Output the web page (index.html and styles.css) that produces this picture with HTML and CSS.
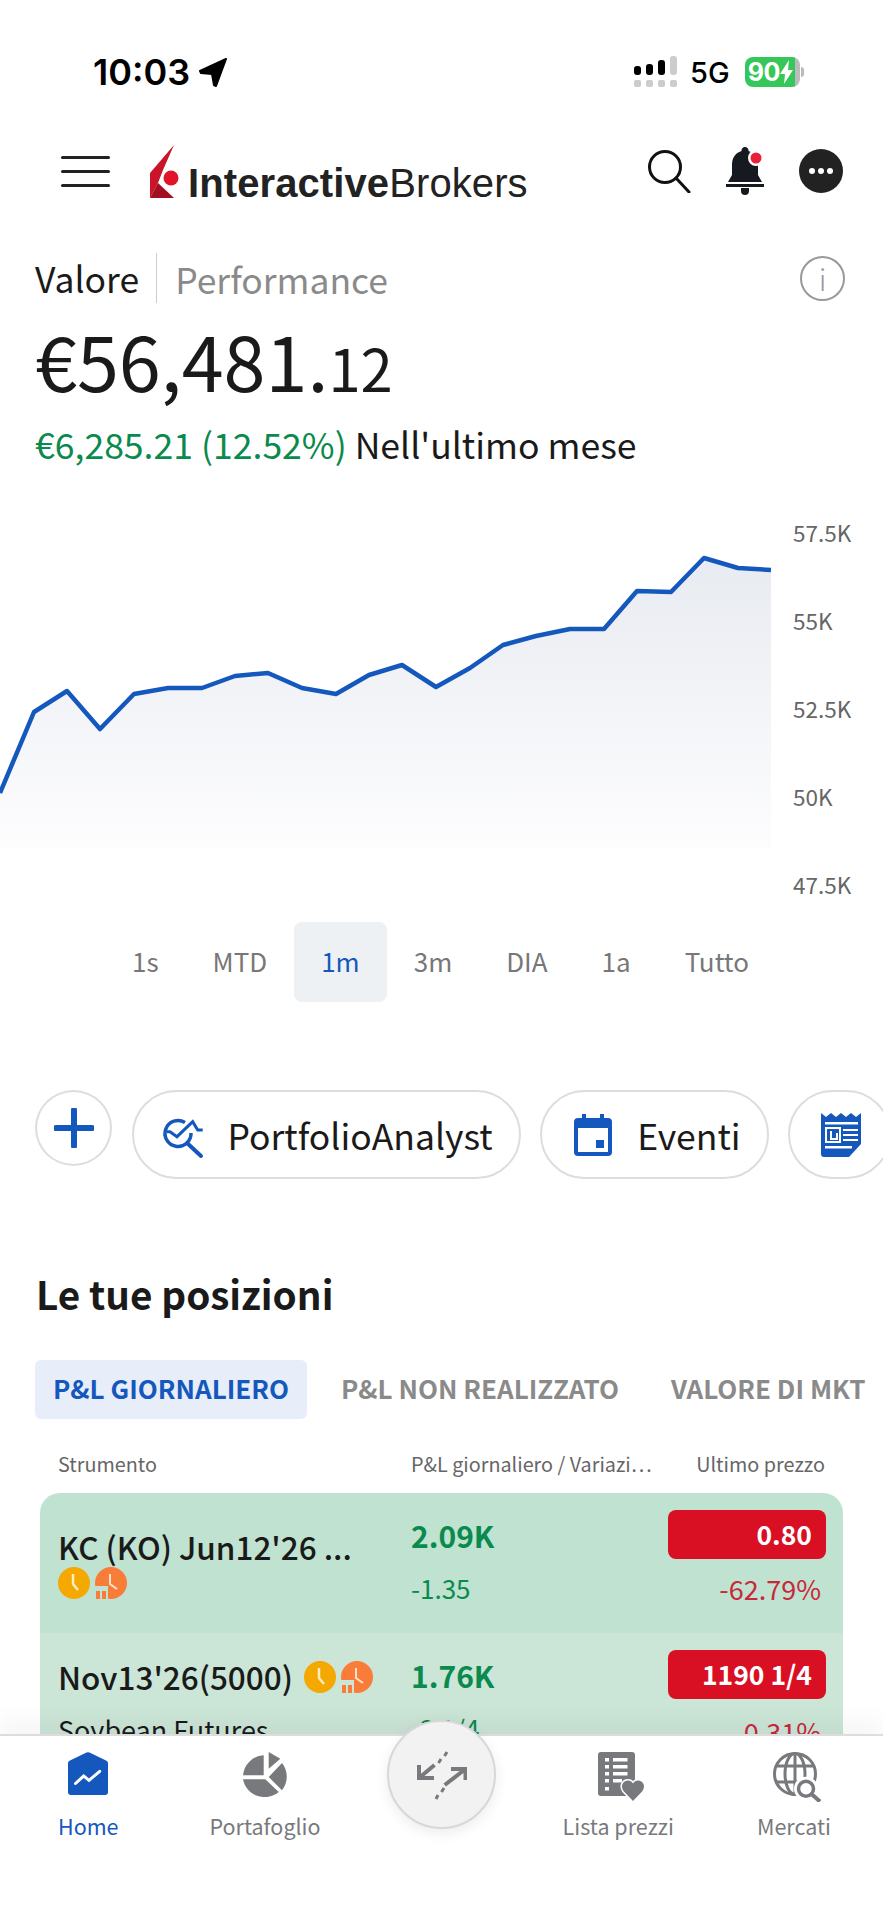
FILE: index.html
```html
<!doctype html>
<html lang="it">

<head>
  <meta charset="UTF-8" />
  <meta name="viewport" content="width=device-width, initial-scale=1.0" />
  <title>Interactive Brokers</title>
  <link rel="stylesheet" href="styles.css">
</head>

<body>
  <svg class="defs" width="0" height="0">
    <symbol id="clock-open" viewBox="0 0 32 32">
      <circle cx="16" cy="16" r="16" fill="#f5a800" />
      <path d="M15 7v10l5 6" fill="none" stroke="#fbeec4" stroke-width="2.5" />
    </symbol>
    <symbol id="clock-late" viewBox="0 0 32 32">
      <circle cx="16" cy="16" r="16" fill="#f97c38" />
      <path d="M15 7v10l7 5" fill="none" stroke="#fde2cf" stroke-width="2" />
      <rect x="-1" y="19" width="14" height="14" fill="currentColor" />
      <path d="M1 24h4v8H1zM7 24h4v8H7z" fill="#f97c38" />
    </symbol>
  </svg>

  <div class="app">
    <!-- barra di stato -->
    <div class="status">
      <span class="time">10:03</span>
      <svg class="location" width="30" height="30" viewBox="0 0 30 30">
        <path d="M28 2 2 14l1 2 11 1 2 11 2 1z" fill="#000" stroke="#000" stroke-width="2" stroke-linejoin="round" />
      </svg>
      <svg class="signal" width="46" height="32" viewBox="0 0 46 32">
        <rect x="0" y="10" width="7" height="9" rx="3" fill="#000" />
        <rect x="12" y="8" width="7" height="11" rx="3" fill="#000" />
        <rect x="24" y="4" width="7" height="15" rx="3" fill="#000" />
        <rect x="36" y="0" width="7" height="19" rx="3" fill="#ccc" />
        <rect x="0" y="24" width="7" height="7" rx="2" fill="#ccc" />
        <rect x="12" y="24" width="7" height="7" rx="2" fill="#ccc" />
        <rect x="24" y="24" width="7" height="7" rx="2" fill="#ccc" />
        <rect x="36" y="24" width="7" height="7" rx="2" fill="#ccc" />
      </svg>
      <span class="net">5G</span>
      <div class="battery">
        <span class="battery-level">90</span>
        <svg width="14" height="24" viewBox="0 0 14 24">
          <path d="M9 0 0 14h5l-1 10 9-14H8z" fill="#fff" />
        </svg>
      </div>
    </div>

    <!-- intestazione -->
    <div class="nav">
      <div class="burger"><i></i><i></i><i></i></div>
      <div class="logo">
        <svg width="30" height="54" viewBox="0 0 30 54">
          <path d="M25 0 1 28v25l8-15 5-13z" fill="#c9142a" />
          <path d="M1 53 9 38l16 15z" fill="#a30f20" />
          <circle cx="22" cy="33" r="7.5" fill="#e01528" />
        </svg>
        <span class="logo-text"><b>Interactive</b>Brokers</span>
      </div>
      <div class="nav-icons">
        <svg width="44" height="44" viewBox="0 0 44 44">
          <circle cx="18" cy="18" r="15.5" fill="none" stroke="#111" stroke-width="3" />
          <path d="m29 29 13 14" fill="none" stroke="#111" stroke-width="3" stroke-linecap="round" />
        </svg>
        <svg width="40" height="48" viewBox="0 0 40 48">
          <path d="M20 0a3.500 3.500 0 0 1 3.500 4C30 6 33 11 33 18v10l4 7H3l4-7V18C7 11 10 6 16.500 4A3.500 3.500 0 0 1 20 0z" fill="#16191f" />
          <path d="M1 37h38v3H1zM16 41h8v3a4 4 0 0 1-8 0z" fill="#16191f" />
          <circle cx="31" cy="11" r="8" fill="#fff" />
          <circle cx="31" cy="11" r="5.500" fill="#e8203a" />
        </svg>
        <svg width="44" height="44" viewBox="0 0 44 44">
          <circle cx="22" cy="22" r="22" fill="#222" />
          <circle cx="13" cy="22" r="3" fill="#fff" />
          <circle cx="22" cy="22" r="3" fill="#fff" />
          <circle cx="31" cy="22" r="3" fill="#fff" />
        </svg>
      </div>
    </div>

    <!-- riepilogo -->
    <div class="summary">
      <div class="switch">
        <span class="switch-on">Valore</span>
        <span class="switch-off">Performance</span>
        <span class="info">i</span>
      </div>
      <div class="amount">€56,481.<small>12</small></div>
      <div class="change"><span class="up">€6,285.21 (12.52%)</span> Nell'ultimo mese</div>
    </div>

    <!-- grafico -->
    <div class="chart">
      <svg class="plot" width="772" height="400" viewBox="0 500 772 400">
        <defs>
          <linearGradient id="area" x1="0" y1="0" x2="0" y2="1">
            <stop offset="0" stop-color="#e8ebf1" />
            <stop offset="1" stop-color="#fdfdfe" />
          </linearGradient>
        </defs>
        <path fill="url(#area)" d="M0 793 34 712 67 691 100 729 134 694 168 688 202 688 235 676 268 673 302 688 336 694 369 675 402 665 436 687 470 668 503 645 536 636 570 629 604 629 637 591 671 592 704 558 738 568 771 570V848H0z" />
        <path fill="none" stroke="#1558bd" stroke-width="4.500" stroke-linejoin="round" d="M0 793 34 712 67 691 100 729 134 694 168 688 202 688 235 676 268 673 302 688 336 694 369 675 402 665 436 687 470 668 503 645 536 636 570 629 604 629 637 591 671 592 704 558 738 568 771 570" />
      </svg>
      <div class="axis">
        <span>57.5K</span>
        <span>55K</span>
        <span>52.5K</span>
        <span>50K</span>
        <span>47.5K</span>
      </div>
    </div>

    <div class="ranges">
      <span class="range">1s</span>
      <span class="range">MTD</span>
      <span class="range range-on">1m</span>
      <span class="range">3m</span>
      <span class="range">DIA</span>
      <span class="range">1a</span>
      <span class="range">Tutto</span>
    </div>

    <!-- scorciatoie -->
    <div class="chips">
      <div class="add">
        <svg width="40" height="40" viewBox="0 0 40 40">
          <path d="M20 2v36M2 20h36" stroke="#1558bd" stroke-width="6" stroke-linecap="round" />
        </svg>
      </div>
      <div class="chip">
        <svg class="chip-pa" width="50" height="50" viewBox="0 0 50 50">
          <path d="M29 12.500A13 13 0 1 0 35 23" fill="none" stroke="#1558bd" stroke-width="3.500" />
          <path d="m31 33 14 13" stroke="#1558bd" stroke-width="4" stroke-linecap="round" />
          <path d="M11 21.700h3l7 5 15.700-15 5 8.300h5" fill="none" stroke="#1558bd" stroke-width="3" />
        </svg>
        <span>PortfolioAnalyst</span>
      </div>
      <div class="chip chip-events">
        <svg width="38" height="42" viewBox="0 0 38 42">
          <path d="M8 0h4v4h14V0h4v4h4a4 4 0 0 1 4 4v30a4 4 0 0 1-4 4H4a4 4 0 0 1-4-4V8a4 4 0 0 1 4-4h4zM4 14v24h30V14zM22 26h8v8h-8z" fill="#1558bd" fill-rule="evenodd" />
        </svg>
        <span>Eventi</span>
      </div>
      <div class="chip">
        <svg class="chip-news" width="44" height="46" viewBox="0 0 44 46">
          <path d="M2 1l5 4 5-4 5 4 5-4 5 4 5-4 5 4 5-4v31L30 45H5a3 3 0 0 1-3-3z" fill="#1558bd" />
          <path d="M6 10h33v2.500H6zM24 17h15v2H24zM24 22h15v2H24zM24 27h15v2H24zM6 34h27v2.500H6z" fill="#fff" />
          <path d="M7 16h14v14H7z" fill="none" stroke="#fff" stroke-width="2" />
          <path d="M12 19v8h6v-6" fill="none" stroke="#fff" stroke-width="2" />
        </svg>
      </div>
    </div>

    <!-- posizioni -->
    <h2 class="section-title">Le tue posizioni</h2>
    <div class="tabs">
      <span class="tab tab-on">P&amp;L GIORNALIERO</span>
      <span class="tab">P&amp;L NON REALIZZATO</span>
      <span class="tab">VALORE DI MKT</span>
    </div>
    <div class="table-head">
      <span class="col-name">Strumento</span>
      <span class="col-pl">P&amp;L giornaliero / Variazi…</span>
      <span class="col-price">Ultimo prezzo</span>
    </div>
    <div class="rows">
      <div class="row row-dark">
        <div class="col-name">
          <div class="name">KC (KO) Jun12'26 ...</div>
          <div class="flags">
            <svg class="flag"><use href="#clock-open" /></svg>
            <svg class="flag"><use href="#clock-late" /></svg>
          </div>
        </div>
        <div class="col-pl">
          <div class="pl">2.09K</div>
          <div class="pl-sub">-1.35</div>
        </div>
        <div class="col-price">
          <div class="price">0.80</div>
          <div class="pct">-62.79%</div>
        </div>
      </div>
      <div class="row row-light">
        <div class="col-name">
          <div class="name">Nov13'26(5000)
            <div class="flags">
              <svg class="flag"><use href="#clock-open" /></svg>
              <svg class="flag"><use href="#clock-late" /></svg>
            </div>
          </div>
          <div class="name-sub">Soybean Futures</div>
        </div>
        <div class="col-pl">
          <div class="pl">1.76K</div>
          <div class="pl-sub">-3 1/4</div>
        </div>
        <div class="col-price">
          <div class="price">1190 1/4</div>
          <div class="pct">-0.31%</div>
        </div>
      </div>
    </div>

    <!-- barra in basso -->
    <div class="tabbar">
      <div class="tabbar-item tabbar-on">
        <svg width="40" height="44" viewBox="0 0 40 44">
          <path d="M18.500.600a3 3 0 0 1 3 0L38 8.500a3 3 0 0 1 2 3V40a3 3 0 0 1-3 3H3a3 3 0 0 1-3-3V11.500a3 3 0 0 1 2-3z" fill="#1558bd" />
          <path d="m7.500 31.500 8.200-7.500 5.300 4.300 10.700-9" fill="none" stroke="#fff" stroke-width="3" stroke-linecap="round" />
        </svg>
        <span>Home</span>
      </div>
      <div class="tabbar-item">
        <svg width="44" height="47" viewBox="0 0 44 47">
          <path d="M0 23.300A22 22 0 0 1 20.700 3.300v20zM25.700 0l11.600 6.700-11.600 10zM39 11a22 22 0 0 1 0 27.300L25.700 25zM0 27.300h22.300L35.700 40A22 22 0 0 1 0 27.300z" fill="#77797c" />
        </svg>
        <span>Portafoglio</span>
      </div>
      <div class="tabbar-gap"></div>
      <div class="tabbar-item">
        <svg class="icon-list" width="48" height="50" viewBox="0 0 48 50">
          <path d="M3 0h31a3 3 0 0 1 3 3v38a3 3 0 0 1-3 3H3a3 3 0 0 1-3-3V3a3 3 0 0 1 3-3z" fill="#77797c" />
          <path d="M7 6h4v3.500H7zM15 6h14.500v3.500H15zM7 13h4v3.500H7zM15 13h14.500v3.500H15zM7 20h4v3.500H7zM15 20h14.500v3.500H15zM7 27h4v3.500H7zM15 27h9v3.500h-9zM7 35h4v3.500H7z" fill="#fff" />
          <path d="M35 49 25.500 39C22 34 25 28.500 30 28.500c2 0 4 1 5 3 1-2 3-3 5-3 5 0 8 5.500 4.500 10.500z" fill="#77797c" stroke="#fff" stroke-width="3" paint-order="stroke" />
        </svg>
        <span>Lista prezzi</span>
      </div>
      <div class="tabbar-item">
        <svg class="icon-globe" width="50" height="50" viewBox="0 0 50 50">
          <g fill="none" stroke="#77797c" stroke-width="3">
            <circle cx="22" cy="22" r="20.500" />
            <ellipse cx="22" cy="22" rx="10" ry="20.500" />
            <path d="M22 1.500v41M4 14h36M4 30h36" />
          </g>
          <circle cx="33" cy="36.700" r="12" fill="#fff" />
          <circle cx="33" cy="36.700" r="7.500" fill="none" stroke="#77797c" stroke-width="3.500" />
          <path d="m39 42.500 8 7" stroke="#77797c" stroke-width="4" />
        </svg>
        <span>Mercati</span>
      </div>
    </div>
    <div class="swap">
      <svg width="50" height="50" viewBox="0 0 50 50">
        <g fill="none" stroke="#77797c" stroke-width="4">
          <path d="M2 28 17.500 15M2 15v13h15M27.700 35 48.500 19M34 19h14.500v11" />
          <path d="M30 2l-2.500 4M24 9l-2.500 4M27 38l-2.500 4M21 45l-2 4" stroke-width="3" />
        </g>
      </svg>
    </div>
  </div>
</body>

</html>
```

FILE: styles.css
```css
* {
  box-sizing: border-box;
}

body {
  margin: 0;
  background: #fff;
  font-family: "Noto Sans CJK SC", "Noto Sans", sans-serif;
  color: #1a1a1a;
}

.defs {
  position: absolute;
}

.app {
  position: relative;
  width: 883px;
  height: 1920px;
  overflow: hidden;
}

/* status */
.status {
  height: 100px;
  padding: 44px 0 0 93px;
  display: flex;
  align-items: center;
  font-family: Inter, "Liberation Sans", sans-serif;
  color: #000;
}

.time {
  font-size: 36px;
  font-weight: 600;
}

.location {
  margin-left: 8px;
}

.signal {
  margin-left: 406px;
}

.net {
  margin-left: 10px;
  font-size: 29px;
  font-weight: 500;
}

.battery {
  margin-left: 15px;
  width: 55px;
  height: 30px;
  border-radius: 8px;
  background: linear-gradient(90deg, #35c759 50px, #bbb 50px);
  display: flex;
  align-items: center;
  padding-left: 3px;
  position: relative;
}

.battery:after {
  content: "";
  position: absolute;
  right: -4px;
  top: 10px;
  width: 3px;
  height: 10px;
  background: #bbb;
  border-radius: 0 3px 3px 0;
}

.battery-level {
  color: #fff;
  font-weight: 700;
  font-size: 25px;
  letter-spacing: -.5px;
}

/* nav */
.nav {
  height: 140px;
  padding: 45px 40px 0 61px;
  display: flex;
  align-items: flex-start;
}

.burger {
  width: 49px;
  margin-top: 11px;
}

.burger i {
  display: block;
  height: 3px;
  background: #222;
  border-radius: 2px;
  margin-bottom: 11px;
}

.logo {
  margin-left: 39px;
  display: flex;
  align-items: flex-end;
}

.logo-text {
  font-family: "Liberation Sans", sans-serif;
  font-size: 40px;
  line-height: 40px;
  letter-spacing: .1px;
  color: #222;
  margin-left: 9px;
  margin-bottom: -4px;
}

.nav-icons {
  margin-left: auto;
  margin-top: 2px;
  display: flex;
  align-items: center;
  gap: 34px;
  height: 48px;
}

/* summary */
.summary {
  padding: 0 35px;
  height: 247px;
}

.switch {
  display: flex;
  align-items: center;
  height: 50px;
  margin-top: 13px;
  font-size: 35.5px;
}

.switch-on {
  padding-right: 17px;
  border-right: 1px solid #ccc;
  line-height: 50px;
}

.switch-off {
  padding-left: 18px;
  color: #8a8a8a;
}

.info {
  margin-left: auto;
  margin-right: 3px;
  width: 45px;
  height: 45px;
  border: 2px solid #999;
  border-radius: 50%;
  color: #999;
  font-size: 30px;
  font-weight: 300;
  line-height: 40px;
  display: flex;
  align-items: center;
  justify-content: center;
}

.amount {
  font-size: 75.5px;
  line-height: 90px;
  margin-top: 11px;
}

.amount small {
  font-size: 58px;
}

.change {
  font-size: 35.6px;
  line-height: 50px;
  margin-top: 7px;
}

.up {
  color: #0b8a4e;
}

/* chart */
.chart {
  height: 400px;
  display: flex;
}

.axis {
  margin-left: 21px;
  padding-top: 18px;
  display: flex;
  flex-direction: column;
  gap: 59px;
  font-size: 22.5px;
  line-height: 29px;
  color: #666;
}

.ranges {
  height: 80px;
  margin-top: 22px;
  padding-left: 105px;
  display: flex;
}

.range {
  padding: 0 27px;
  line-height: 77px;
  font-size: 26px;
  color: #777;
}

.range-on {
  background: #eef1f4;
  border-radius: 8px;
  color: #1558bd;
}

/* chips */
.chips {
  margin-top: 88px;
  margin-left: 35px;
  display: flex;
  align-items: flex-start;
  gap: 19.5px;
  width: 900px;
}

.add {
  width: 77px;
  height: 76px;
  border: 2px solid #ddd;
  border-radius: 50%;
  display: flex;
  align-items: center;
  justify-content: center;
  flex: none;
}

.chip {
  height: 89px;
  padding: 0 26px 0 32px;
  border: 2px solid #ddd;
  border-radius: 45px;
  display: flex;
  align-items: center;
  gap: 22px;
  font-size: 35.5px;
  flex: none;
}

.chip-pa {
  margin-left: -10px;
}

.chip-events {
  gap: 25px;
}

.chip-news {
  margin-left: -3px;
}

/* positions */
.section-title {
  margin: 90px 0 0 36px;
  font-size: 38.7px;
  line-height: 48px;
  font-weight: 700;
}

.tabs {
  margin: 43px 0 0 35px;
  display: flex;
  gap: 16px;
  white-space: nowrap;
}

.tab {
  height: 59px;
  padding: 0 18px;
  line-height: 56px;
  font-size: 26px;
  font-weight: 700;
  color: #8a8a8a;
}

.tab-on {
  background: #e8eef9;
  border-radius: 6px;
  color: #1558bd;
}

.table-head {
  margin: 30px 58px 0 58px;
  display: flex;
  font-size: 19.8px;
  line-height: 30px;
  color: #666;
  white-space: nowrap;
}

.col-name {
  width: 353px;
  flex: none;
}

.col-pl {
  width: 240px;
  flex: none;
}

.col-price {
  margin-left: auto;
  text-align: right;
}

.rows {
  margin: 14px 40px 0;
  border-radius: 20px 20px 0 0;
  overflow: hidden;
}

.row {
  height: 140px;
  padding: 17px 17px 0 18px;
  display: flex;
}

.row-dark {
  background: #c0e2d0;
}

.row-light {
  background: #cbe5d7;
}

.row-dark .flag {
  color: #c0e2d0;
}

.row-light .flag {
  color: #cbe5d7;
}

.name {
  margin-top: 16px;
  font-size: 31.5px;
  line-height: 40px;
  font-weight: 500;
  white-space: nowrap;
  display: flex;
  align-items: center;
  gap: 11px;
}

.row-light .name {
  margin-top: 6px;
}

.name-sub {
  margin-top: 16px;
  font-size: 27px;
  line-height: 36px;
}

.flags {
  display: flex;
  gap: 5px;
  margin-top: 1px;
}

.flag {
  width: 32px;
  height: 32px;
}

.pl {
  margin-top: 5px;
  font-size: 30px;
  line-height: 40px;
  font-weight: 700;
  color: #0b8a4e;
}

.pl-sub {
  margin-top: 16px;
  font-size: 26px;
  line-height: 34px;
  color: #0b8a4e;
}

.price {
  width: 158px;
  height: 49px;
  padding-right: 14px;
  line-height: 47px;
  border-radius: 8px;
  background: #d91023;
  color: #fff;
  font-size: 26.5px;
  font-weight: 700;
}

.pct {
  margin-top: 12px;
  padding-right: 5px;
  font-size: 27px;
  line-height: 36px;
  color: #c8283a;
}

.row-light .pct {
  margin-top: 15px;
}

/* bottom bar */
.tabbar {
  position: absolute;
  left: 0;
  right: 0;
  top: 1734px;
  bottom: 0;
  background: #fff;
  border-top: 2px solid #ddd;
  box-shadow: 0 -16px 22px rgba(0, 0, 0, .035);
  padding: 16px 52px 0 58px;
  display: flex;
  align-items: flex-start;
}

.tabbar-item {
  height: 90px;
  display: flex;
  flex-direction: column;
  align-items: center;
  justify-content: space-between;
  font-size: 21.5px;
  line-height: 32px;
  color: #77797c;
}

.tabbar-on {
  color: #1558bd;
}

.tabbar-item:nth-child(2) {
  margin-left: 91px;
}

.tabbar-gap {
  flex: 1;
}

.tabbar-item:nth-child(5) {
  margin-left: 83px;
}

.icon-list {
  margin-left: 8px;
}

.icon-globe {
  margin-left: 8px;
}

/* floating button */
.swap {
  position: absolute;
  left: 387px;
  top: 1720px;
  width: 109px;
  height: 109px;
  border: 2px solid #d8d8d8;
  border-radius: 50%;
  background: #f2f2f2;
  box-shadow: 0 4px 14px rgba(0, 0, 0, .08);
  display: flex;
  align-items: center;
  justify-content: center;
}
```
